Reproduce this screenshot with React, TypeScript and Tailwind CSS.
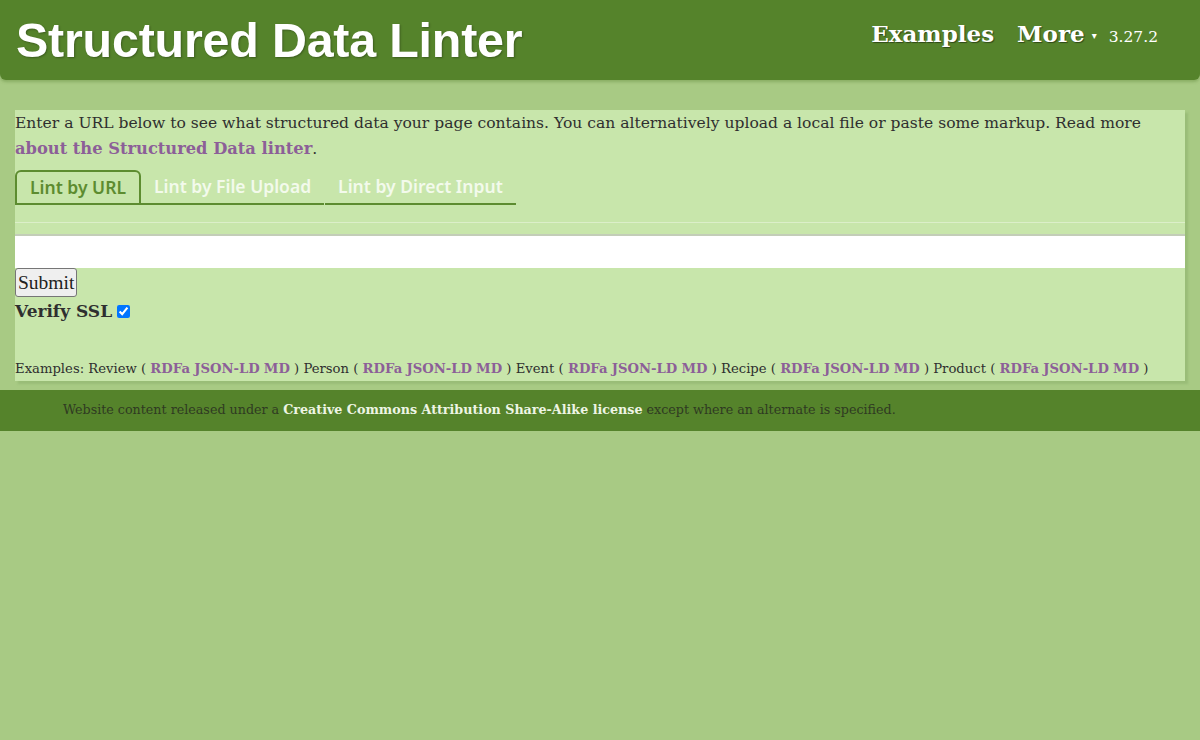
import React from 'react'

const serif = { fontFamily: '"DejaVu Serif", Georgia, serif' }

function ExampleLinks() {
  return (
    <>
      ( <a className="font-bold text-[#8c5f98]">RDFa</a> <a className="font-bold text-[#8c5f98]">JSON-LD</a>{' '}
      <a className="font-bold text-[#8c5f98]">MD</a> )
    </>
  )
}

export default function App() {
  const kinds = ['Review', 'Person', 'Event', 'Recipe', 'Product']
  return (
    <div className="min-h-[740px] bg-[#a8ca84] text-[#2f2f2f]" style={serif}>
      <header className="h-[80px] bg-[#55832b] rounded-b-md flex items-start justify-between pl-[16px] pr-[42px] shadow-[0_2px_3px_rgba(80,120,40,0.35)]">
        <h1
          className="text-[48.4px] font-bold text-white leading-none mt-[16px] tracking-[-0.2px]"
          style={{ fontFamily: '"Liberation Sans", Arial, sans-serif', textShadow: '1px 1px 2px rgba(0,0,0,0.3)' }}
        >
          Structured Data Linter
        </h1>
        <nav className="flex items-baseline mt-[17px] text-white">
          <a className="text-[23px] font-bold [text-shadow:1px_1px_1px_rgba(0,0,0,0.45)]">Examples</a>
          <a className="text-[23px] font-bold ml-[23px] [text-shadow:1px_1px_1px_rgba(0,0,0,0.45)]">More</a>
          <span className="ml-[7px] text-[10px] relative -top-[3px]">▾</span>
          <span className="ml-[12px] text-[15.5px]">3.27.2</span>
        </nav>
      </header>

      <main className="mx-[15px] mt-[30px] bg-[#c8e6ab] shadow-[3px_3px_2px_rgba(120,160,90,0.3)]">
        <p className="text-[15.55px] leading-[25px] pt-[1px]">
          Enter a URL below to see what structured data your page contains. You can alternatively upload a local file or paste some markup. Read more
          <br />
          <a className="font-bold text-[#8c5f98] text-[16.3px]">about the Structured Data linter</a>.
        </p>

        <div
          className="flex items-end mt-[8px] text-[17.5px] font-semibold"
          style={{ fontFamily: '"Noto Sans", "Open Sans", sans-serif' }}
        >
          <div className="h-[35px] px-[13px] flex items-center border-2 border-[#5d8c30] rounded-t-md text-[#5d8c30] bg-[#c8e6ab]">
            Lint by URL
          </div>
          <div className="h-[35px] px-[13px] flex items-center border-b-2 border-[#5d8c30] text-[#f3faec]">
            Lint by File Upload
          </div>
          <div className="h-[35px] px-[13px] flex items-center border-b-2 border-[#5d8c30] text-[#f3faec] ml-[1px]">
            Lint by Direct Input
          </div>
        </div>

        <div className="mt-[17px] border-t border-[#dcefc9]" />
        <input
          type="text"
          className="block w-full h-[34px] mt-[11px] bg-white border-t-2 border-[#c3cdb8] outline-none"
        />
        <button
          className="block h-[29px] px-[2px] bg-[#efefef] border border-[#767676] rounded-[3px] text-[19.5px] leading-none text-[#222]"
          style={{ fontFamily: '"Liberation Serif", "Times New Roman", serif' }}
        >
          Submit
        </button>
        <label className="flex items-center mt-[2px] text-[17px] font-bold">
          Verify SSL
          <input type="checkbox" defaultChecked className="ml-[5px] w-[13px] h-[13px] accent-[#0075ff]" />
        </label>

        <p className="mt-[32px] text-[13.2px] leading-[23px] pb-[1px]">
          Examples:{' '}
          {kinds.map((k) => (
            <span key={k}>
              {k} <ExampleLinks />{' '}
            </span>
          ))}
        </p>
      </main>

      <footer className="mt-[9px] h-[41px] bg-[#55832b] flex items-center pl-[63px] text-[12.7px] text-[#2f3a22]">
        <span>
          Website content released under a{' '}
          <a className="font-bold text-[#eef5e4]">Creative Commons Attribution Share-Alike license</a> except where an
          alternate is specified.
        </span>
      </footer>
    </div>
  )
}
